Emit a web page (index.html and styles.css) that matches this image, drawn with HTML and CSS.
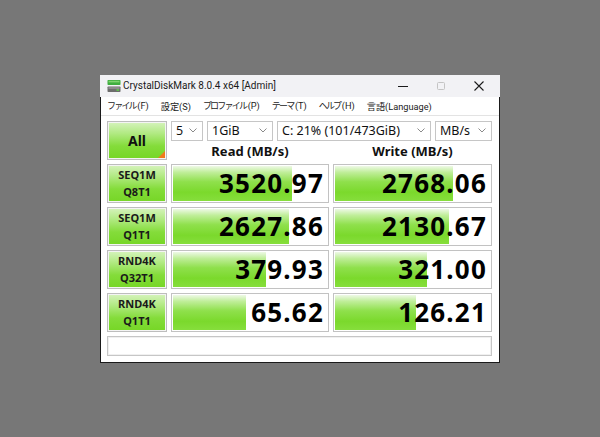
FILE: index.html
```html
<!DOCTYPE html>
<html lang="ja">
<head>
<meta charset="utf-8">
<title>CrystalDiskMark</title>
<link rel="stylesheet" href="styles.css">
</head>
<body>
<div class="window">
  <div class="titlebar">
    <svg class="app-icon" width="14" height="14" viewBox="0 0 14 14">
      <rect x="0.5" y="1" width="13" height="5" rx="0.8" fill="#3fae3f"/>
      <rect x="1.5" y="1.8" width="11" height="1.6" fill="#7fd46f"/>
      <rect x="0.5" y="7.5" width="13" height="5.5" rx="0.8" fill="#6d6d6d"/>
      <rect x="1.5" y="8.3" width="11" height="1.4" fill="#9a9a9a"/>
      <rect x="9.5" y="10.2" width="2.5" height="1.6" fill="#5fd04a"/>
    </svg>
    <span class="title">CrystalDiskMark 8.0.4 x64 [Admin]</span>
    <div class="controls">
      <span class="ctl"><svg width="10" height="10" viewBox="0 0 10 10"><line x1="0" y1="5.5" x2="10" y2="5.5" stroke="#1b1b1b" stroke-width="1"/></svg></span>
      <span class="ctl"><svg width="10" height="10" viewBox="0 0 10 10"><rect x="1.5" y="1.5" width="7" height="7" rx="1" fill="none" stroke="#c4c4c4" stroke-width="1"/></svg></span>
      <span class="ctl"><svg width="10" height="10" viewBox="0 0 10 10"><path d="M0.5 0.5 L9.5 9.5 M9.5 0.5 L0.5 9.5" stroke="#1b1b1b" stroke-width="1.1"/></svg></span>
    </div>
  </div>
  <div class="client">
    <div class="menubar">
      <span class="menu-item"><span class="kana">ファイル</span>(F)</span>
      <span class="menu-item">設定(S)</span>
      <span class="menu-item"><span class="kana">プロファイル</span>(P)</span>
      <span class="menu-item"><span class="kana">テーマ</span>(T)</span>
      <span class="menu-item"><span class="kana">ヘルプ</span>(H)</span>
      <span class="menu-item">言語(Language)</span>
    </div>
    <div class="content">
      <div class="grid">
        <div class="all-btn">All<span class="corner"></span></div>
        <div class="top-right">
          <div class="selects">
            <div class="select s-count"><span>5</span><svg class="chev" width="8" height="5" viewBox="0 0 8 5"><polyline points="0.5,0.5 4,4 7.5,0.5" fill="none" stroke="#8a8a8a" stroke-width="1"/></svg></div>
            <div class="select s-size"><span>1GiB</span><svg class="chev" width="8" height="5" viewBox="0 0 8 5"><polyline points="0.5,0.5 4,4 7.5,0.5" fill="none" stroke="#8a8a8a" stroke-width="1"/></svg></div>
            <div class="select s-drive"><span>C: 21% (101/473GiB)</span><svg class="chev" width="8" height="5" viewBox="0 0 8 5"><polyline points="0.5,0.5 4,4 7.5,0.5" fill="none" stroke="#8a8a8a" stroke-width="1"/></svg></div>
            <div class="select s-unit"><span>MB/s</span><svg class="chev" width="8" height="5" viewBox="0 0 8 5"><polyline points="0.5,0.5 4,4 7.5,0.5" fill="none" stroke="#8a8a8a" stroke-width="1"/></svg></div>
          </div>
          <div class="heads">
            <div class="head">Read (MB/s)</div>
            <div class="head">Write (MB/s)</div>
          </div>
        </div>

        <div class="label">SEQ1M<br>Q8T1</div>
        <div class="value"><div class="bar" style="width:119px"></div><span class="num">3520.97</span></div>
        <div class="value"><div class="bar" style="width:118px"></div><span class="num">2768.06</span></div>

        <div class="label">SEQ1M<br>Q1T1</div>
        <div class="value"><div class="bar" style="width:116px"></div><span class="num">2627.86</span></div>
        <div class="value"><div class="bar" style="width:114px"></div><span class="num">2130.67</span></div>

        <div class="label">RND4K<br>Q32T1</div>
        <div class="value"><div class="bar" style="width:93px"></div><span class="num">379.93</span></div>
        <div class="value"><div class="bar" style="width:92px"></div><span class="num">321.00</span></div>

        <div class="label">RND4K<br>Q1T1</div>
        <div class="value"><div class="bar" style="width:73px"></div><span class="num">65.62</span></div>
        <div class="value"><div class="bar" style="width:81px"></div><span class="num">126.21</span></div>
      </div>
      <div class="status"></div>
    </div>
  </div>
</div>
</body>
</html>
```
FILE: styles.css
```css
html, body {
  margin: 0;
  padding: 0;
}
body {
  background: #777777;
  height: 100vh;
  display: flex;
  align-items: center;
  justify-content: center;
  font-family: "Noto Sans", "Noto Sans CJK JP", sans-serif;
}
.window {
  width: 400px;
  height: 288px;
  display: flex;
  flex-direction: column;
}
.titlebar {
  height: 22px;
  background: #f2f2f5;
  display: flex;
  align-items: center;
  padding-left: 7px;
  padding-right: 2px;
}
.app-icon {
  display: block;
  flex: none;
}
.title {
  margin-left: 2px;
  font-family: Roboto, "Noto Sans", sans-serif;
  font-size: 10px;
  color: #1a1a1a;
  white-space: nowrap;
}
.controls {
  margin-left: auto;
  display: flex;
  height: 100%;
}
.ctl {
  width: 38px;
  display: flex;
  align-items: center;
  justify-content: center;
}
.ctl svg { display: block; }
.client {
  flex: 1;
  display: flex;
  flex-direction: column;
  background: #ffffff;
  border: 1px solid #1a1a1a;
  border-top: none;
}
.menubar {
  height: 18px;
  display: flex;
  align-items: center;
  padding-left: 6px;
  gap: 12px;
  border-bottom: 1px solid #e3e3e3;
  font-family: Roboto, "Noto Sans CJK JP", sans-serif;
  font-size: 9.2px;
  color: #1a1a1a;
}
.menu-item {
  white-space: nowrap;
}
.kana {
  font-size: 9px;
  letter-spacing: -1.8px;
  margin-right: 1.5px;
}
.content {
  flex: 1;
  padding: 5px 0 0 6px;
  display: flex;
  flex-direction: column;
  gap: 4px;
}
.grid {
  display: grid;
  grid-template-columns: 60px 158px 159px;
  grid-auto-rows: 39px;
  gap: 4px;
}
.all-btn {
  position: relative;
  box-sizing: border-box;
  border: 1px solid #bdbdbd;
  box-shadow: inset 0 0 0 1px #f4f4f4;
  background: linear-gradient(#d6f3bd 0%, #b2ea84 30%, #84dc3a 65%, #76d626 100%);
  display: flex;
  align-items: center;
  justify-content: center;
  font-weight: 700;
  font-size: 14px;
  color: #111;
}
.corner {
  position: absolute;
  right: 1px;
  bottom: 1px;
  width: 0;
  height: 0;
  border-left: 7px solid transparent;
  border-bottom: 7px solid #f07a1c;
}
.top-right {
  grid-column: 2 / 4;
  display: flex;
  flex-direction: column;
}
.selects {
  display: flex;
  gap: 4px;
  height: 20px;
}
.select {
  box-sizing: border-box;
  height: 20px;
  border: 1px solid #c6c6c6;
  background: #fff;
  display: flex;
  align-items: center;
  padding: 0 5px 0 4px;
  font-size: 12.5px;
  color: #111;
  white-space: nowrap;
}
.select span { flex: 1; }
.chev { display: block; flex: none; }
.s-count { width: 32px; }
.s-size { width: 66px; }
.s-drive { width: 154px; }
.s-unit { width: 57px; }
.heads {
  flex: 1;
  display: grid;
  grid-template-columns: 158px 159px;
  gap: 4px;
}
.head {
  display: flex;
  align-items: center;
  justify-content: center;
  font-weight: 700;
  font-size: 13px;
  color: #111;
  padding-top: 1px;
}
.label {
  box-sizing: border-box;
  border: 1px solid #bdbdbd;
  box-shadow: inset 0 0 0 1px #f4f4f4;
  background: linear-gradient(#d6f3bd 0%, #b2ea84 30%, #84dc3a 65%, #76d626 100%);
  display: flex;
  align-items: center;
  justify-content: center;
  text-align: center;
  font-weight: 700;
  font-size: 11px;
  line-height: 17px;
  color: #1a1a1a;
}
.value {
  position: relative;
  box-sizing: border-box;
  border: 1px solid #c2c2c2;
  background: #fff;
  display: flex;
  align-items: center;
  justify-content: flex-end;
  padding-right: 4px;
  overflow: hidden;
}
.bar {
  position: absolute;
  left: 1px;
  top: 1px;
  bottom: 1px;
  background: linear-gradient(#eef9e6 0%, #c0ee9a 18%, #8fe04c 45%, #7bd92c 75%, #86de3c 100%);
}
.num {
  position: relative;
  font-weight: 700;
  font-size: 26px;
  letter-spacing: 1.2px;
  color: #000;
  line-height: 1;
}
.status {
  width: 385px;
  height: 20px;
  box-sizing: border-box;
  border: 1px solid #c6c6c6;
  box-shadow: inset 0 0 0 1px #f0f0f0;
  background: #fff;
}
```
